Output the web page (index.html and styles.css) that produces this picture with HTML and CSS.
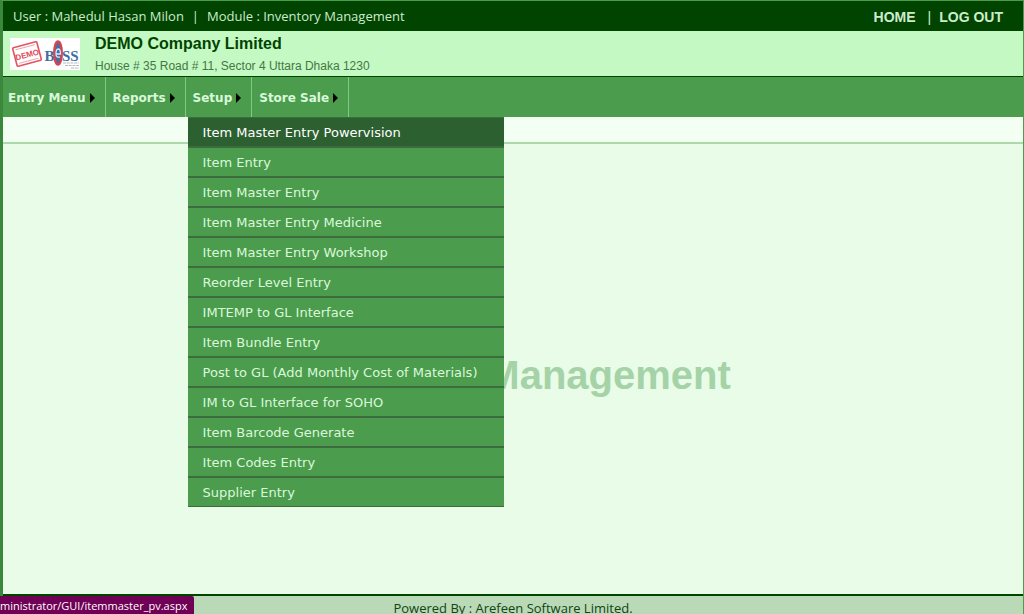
FILE: index.html
```html
<!DOCTYPE html>
<html lang="en">
<head>
<meta charset="utf-8">
<title>Inventory Management</title>
<link rel="stylesheet" href="styles.css">
</head>
<body>
<div class="page">
  <header class="topbar">
    <div class="session"><span>User : Mahedul Hasan Milon</span><span>|</span><span>Module : Inventory Management</span></div>
    <nav class="links"><a href="#">HOME</a><span class="bar">|</span><a href="#">LOG OUT</a></nav>
  </header>
  <section class="company">
    <svg class="logo" viewBox="0 0 70 32" role="img" aria-label="Demo Boss">
      <rect width="70" height="32" fill="#fff"/>
      <g transform="rotate(-15 17 16)" fill="none" stroke="#e2545f">
        <rect x="4.500" y="6.500" width="25" height="19" rx="1" stroke-width="1.6"/>
        <path d="M7 9h20M7 23h20" stroke-width=".5"/>
        <text x="17" y="19.500" class="logo-demo">DEMO</text>
      </g>
      <text x="34.500" y="22.500" class="logo-boss">B</text>
      <ellipse cx="48" cy="15" rx="3.800" ry="11.500" fill="#3f70a8" stroke="#d5444f" stroke-width="2.400"/>
      <path d="M46 16h4.500q0-5-2.300-5t-2.200 5q0 4 4 3" fill="none" stroke="#dce9f5" stroke-width="1.300"/>
      <text x="52" y="22.500" class="logo-boss">SS</text>
      <path d="M53 25h16M55 27.500h14M61 30h8" stroke="#b9b9c2" stroke-width="1.200" stroke-dasharray="3 .7"/>
    </svg>
    <div>
      <h1 class="company-name">DEMO Company Limited</h1>
      <p class="address">House # 35 Road # 11, Sector 4 Uttara Dhaka 1230</p>
    </div>
  </section>
  <nav class="menubar">
    <div class="menu"><button class="menu-button">Entry Menu<i class="arrow"></i></button></div>
    <div class="menu"><button class="menu-button">Reports<i class="arrow"></i></button></div>
    <div class="menu"><button class="menu-button">Setup<i class="arrow"></i></button>
      <ul class="dropdown">
        <li><a class="current" href="#">Item Master Entry Powervision</a></li>
        <li><a href="#">Item Entry</a></li>
        <li><a href="#">Item Master Entry</a></li>
        <li><a href="#">Item Master Entry Medicine</a></li>
        <li><a href="#">Item Master Entry Workshop</a></li>
        <li><a href="#">Reorder Level Entry</a></li>
        <li><a href="#">IMTEMP to GL Interface</a></li>
        <li><a href="#">Item Bundle Entry</a></li>
        <li><a href="#">Post to GL (Add Monthly Cost of Materials)</a></li>
        <li><a href="#">IM to GL Interface for SOHO</a></li>
        <li><a href="#">Item Barcode Generate</a></li>
        <li><a href="#">Item Codes Entry</a></li>
        <li><a href="#">Supplier Entry</a></li>
      </ul>
    </div>
    <div class="menu"><button class="menu-button">Store Sale<i class="arrow"></i></button></div>
  </nav>
  <div class="strip"></div>
  <main class="content"><h2 class="module-title">Inventory Management</h2></main>
  <footer class="footer">Powered By : Arefeen Software Limited.</footer>
</div>
<div class="status">ministrator/GUI/itemmaster_pv.aspx</div>
</body>
</html>
```
FILE: styles.css
```css
* { box-sizing: border-box; }
body { margin: 0; font-family: "Liberation Sans", Arial, sans-serif; }
h1, h2, p, ul { margin: 0; padding: 0; }
a { color: inherit; text-decoration: none; }
.page {
  display: flex;
  flex-direction: column;
  height: 100vh;
  overflow: hidden;
  border: 1px solid #4c9c4e;
  border-width: 1px 1px 0 3px;
  border-left-color: #3b883c;
  background: #e8fce8;
}
.topbar {
  display: flex;
  justify-content: space-between;
  align-items: center;
  height: 30px;
  padding: 0 20px 0 10px;
  background: #004400;
  color: #cdeccd;
}
.session { display: flex; gap: 8px; font: 13px "Open Sans", sans-serif; }
.links { display: flex; gap: 8px; font-size: 14px; font-weight: bold; padding-top: 2px; }
.bar { font-weight: normal; padding-left: 4px; }
.company {
  display: flex;
  align-items: center;
  gap: 15px;
  height: 46px;
  padding-left: 7px;
  background: #c5f9c3;
  border-bottom: 1px solid #004400;
}
.logo { width: 70px; height: 32px; }
.logo-demo { font: bold 8px "Liberation Sans", sans-serif; text-anchor: middle; fill: #df4652; stroke: none; }
.logo-boss { font: bold 15px "Liberation Serif", serif; fill: #406f9f; }
.company-name { font-size: 16px; line-height: 20px; color: #004400; }
.address { font-size: 12px; line-height: 16px; padding-top: 4px; color: #447744; }
.company-name, .address { white-space: nowrap; }
.menubar { display: flex; height: 40px; background: #4c9c4e; }
.menu { position: relative; border-right: 1px solid #83c785; }
.menu-button {
  display: flex;
  align-items: center;
  gap: 4px;
  height: 100%;
  padding: 1px 10px 0 7px;
  border: 0;
  background: none;
  color: #d9f9d9;
  font: bold 12px "DejaVu Sans", Verdana, sans-serif;
}
.menu:first-child .menu-button { padding-left: 5px; }
.arrow { border: solid transparent; border-width: 5px 0 5px 5px; border-left-color: #000; }
.dropdown {
  position: absolute;
  z-index: 1;
  top: 100%;
  left: 2px;
  min-width: 316px;
  list-style: none;
  border-top: 1px solid #3d6c3f;
  border-bottom: 1px solid #3d6c3f;
}
.dropdown a {
  display: block;
  height: 30px;
  padding: 0 15px;
  border-bottom: 2px solid #3d6c3f;
  background: #4c9c4e;
  color: #d9f9d9;
  font: 13px/30px "DejaVu Sans", Verdana, sans-serif;
  white-space: nowrap;
}
.dropdown li:last-child a { height: 28px; border-bottom: 0; }
.dropdown .current { background: #2d6030; color: #fff; }
.strip { height: 27px; background: #f4fff4; border-bottom: 2px solid #abd9ab; }
.content { flex: 1; display: flex; align-items: center; justify-content: center; padding-top: 12px; }
.module-title { font-size: 40px; line-height: 48px; color: #a5d3a7; }
.footer {
  height: 20px;
  border-top: 2px solid #004400;
  background: #b9d9b7;
  color: #114411;
  font: 13px/24px "Open Sans", sans-serif;
  text-align: center;
}
.status {
  position: fixed;
  z-index: 2;
  left: 0;
  bottom: 0;
  height: 18px;
  padding-right: 7px;
  border-top-right-radius: 2px;
  background: #700056;
  color: #fff;
  font: 11px/19px "Open Sans", sans-serif;
}
```
